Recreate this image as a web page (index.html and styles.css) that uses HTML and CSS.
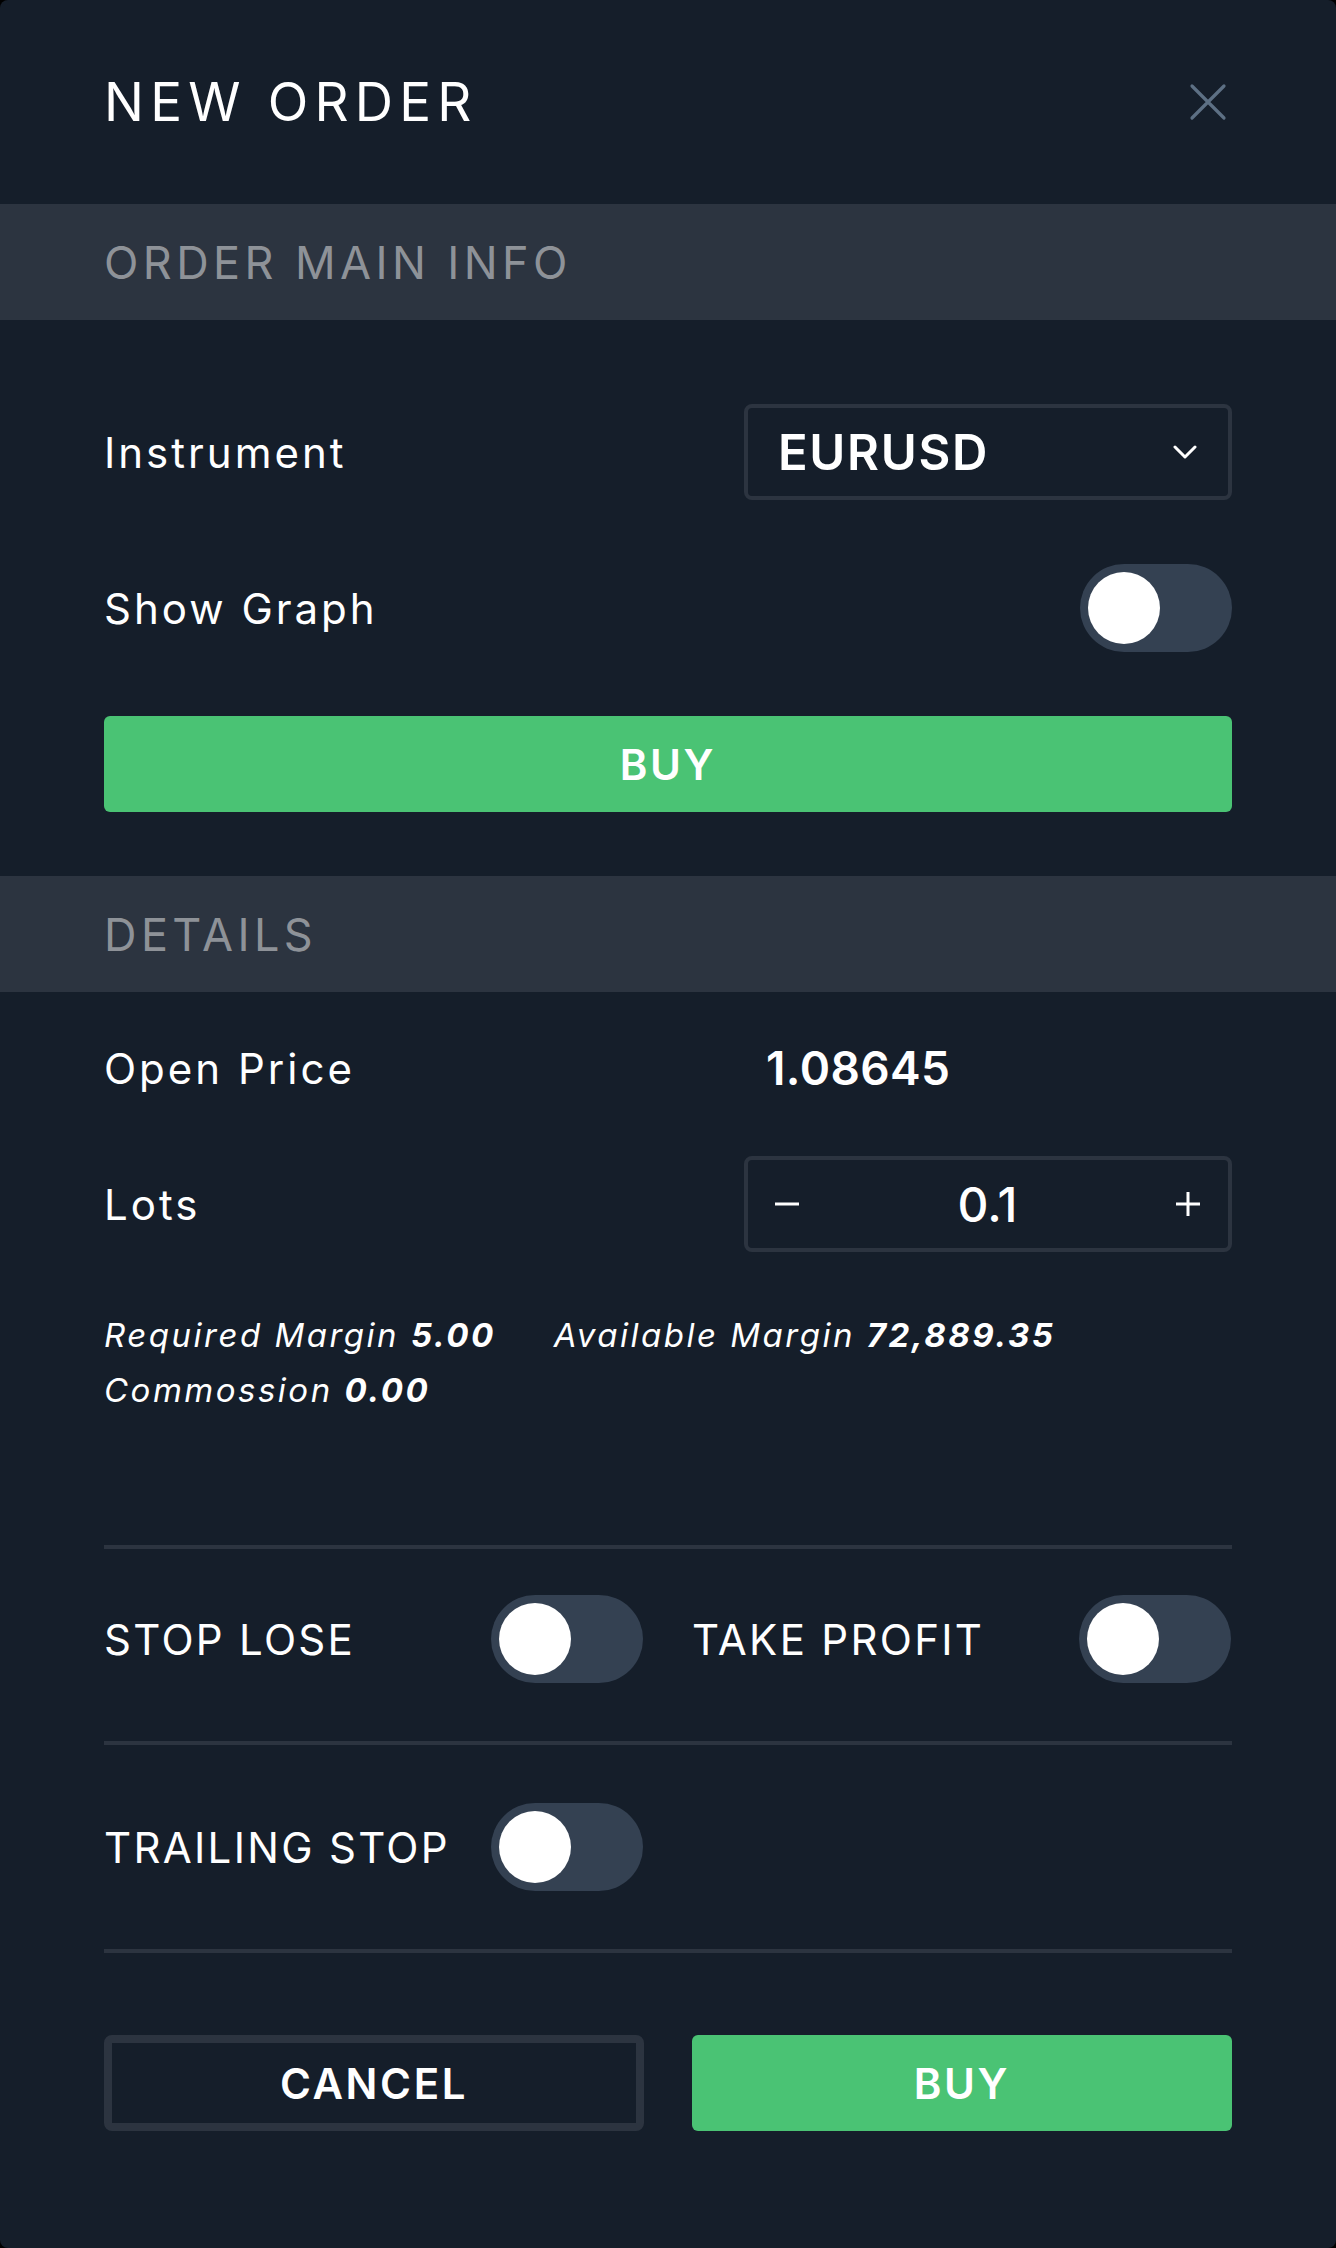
FILE: index.html
```html
<!DOCTYPE html>
<html lang="en">
<head>
<meta charset="utf-8">
<title>New Order</title>
<link rel="stylesheet" href="styles.css">
</head>
<body>
<div class="modal">
  <header class="modal-header">
    <h1 class="title">NEW ORDER</h1>
    <button class="close" aria-label="Close">
      <svg width="48" height="48" viewBox="0 0 48 48"><path d="M8 8 L40 40 M40 8 L8 40" stroke="#5d7084" stroke-width="3.2" stroke-linecap="round" fill="none"/></svg>
    </button>
  </header>

  <div class="band">ORDER MAIN INFO</div>

  <section class="main-info">
    <div class="row">
      <span class="label">Instrument</span>
      <div class="select">
        <span class="select-value">EURUSD</span>
        <svg class="chevron" width="24" height="16" viewBox="0 0 24 16"><path d="M2 3 L12 13 L22 3" stroke="#ffffff" stroke-width="3" stroke-linecap="round" stroke-linejoin="round" fill="none"/></svg>
      </div>
    </div>
    <div class="row row-switch">
      <span class="label">Show Graph</span>
      <span class="toggle"><span class="knob"></span></span>
    </div>
    <button class="btn btn-buy btn-full">BUY</button>
  </section>

  <div class="band">DETAILS</div>

  <section class="details">
    <div class="row">
      <span class="label">Open Price</span>
      <span class="price">1.08645</span>
    </div>
    <div class="row">
      <span class="label">Lots</span>
      <div class="stepper">
        <svg class="step-icon" width="26" height="26" viewBox="0 0 26 26"><path d="M1 13 H25" stroke="#ffffff" stroke-width="3" fill="none"/></svg>
        <span class="step-value">0.1</span>
        <svg class="step-icon" width="26" height="26" viewBox="0 0 26 26"><path d="M1 13 H25 M13 1 V25" stroke="#ffffff" stroke-width="3" fill="none"/></svg>
      </div>
    </div>
    <div class="margins">
      <div class="margin-line">
        <span class="m-item">Required Margin <b>5.00</b></span>
        <span class="m-item">Available Margin <b>72,889.35</b></span>
      </div>
      <div class="margin-line">
        <span class="m-item">Commossion <b>0.00</b></span>
      </div>
    </div>
  </section>

  <div class="divider"></div>

  <div class="switch-grid">
    <div class="switch-cell">
      <span class="caps-label">STOP LOSE</span>
      <span class="toggle"><span class="knob"></span></span>
    </div>
    <div class="switch-cell">
      <span class="caps-label">TAKE PROFIT</span>
      <span class="toggle"><span class="knob"></span></span>
    </div>
  </div>

  <div class="divider"></div>

  <div class="switch-grid">
    <div class="switch-cell">
      <span class="caps-label">TRAILING STOP</span>
      <span class="toggle"><span class="knob"></span></span>
    </div>
  </div>

  <div class="divider"></div>

  <div class="actions">
    <button class="btn btn-cancel">CANCEL</button>
    <button class="btn btn-buy">BUY</button>
  </div>
</div>
</body>
</html>
```

FILE: styles.css
```css
* { box-sizing: border-box; }

html, body {
  margin: 0;
  padding: 0;
  background: #000000;
}

body {
  font-family: "Inter", "Open Sans", sans-serif;
  color: #ffffff;
}

.modal {
  width: 1336px;
  height: 2248px;
  background: #151e2a;
  border-radius: 8px;
  overflow: hidden;
}

.modal-header {
  height: 204px;
  padding: 0 104px;
  display: flex;
  align-items: center;
  justify-content: space-between;
}

.title {
  margin: 0;
  font-size: 53px;
  font-weight: 400;
  letter-spacing: 6.2px;
  line-height: 1;
}

.close {
  width: 48px;
  height: 48px;
  padding: 0;
  border: 0;
  background: transparent;
  display: flex;
}

.band {
  height: 116px;
  background: #2c3440;
  padding-left: 104px;
  display: flex;
  align-items: center;
  font-size: 45px;
  font-weight: 400;
  letter-spacing: 4.4px;
  color: #8e9298;
}

.main-info {
  padding: 84px 104px 64px;
  display: flex;
  flex-direction: column;
  gap: 64px;
}

.row {
  display: grid;
  grid-template-columns: 640px 1fr;
  align-items: center;
  height: 96px;
}

.row-switch {
  height: 88px;
  display: flex;
  justify-content: space-between;
}

.label {
  font-size: 42px;
  font-weight: 400;
  letter-spacing: 3px;
}

.select {
  height: 96px;
  border: 4px solid #2c3440;
  border-radius: 8px;
  display: flex;
  align-items: center;
  justify-content: space-between;
  padding: 0 31px 0 30px;
}

.select-value {
  font-size: 49px;
  font-weight: 600;
  letter-spacing: 1.7px;
}

.chevron { display: block; }

.toggle {
  width: 152px;
  height: 88px;
  border-radius: 44px;
  background: #344152;
  padding: 8px;
  display: flex;
}

.knob {
  width: 72px;
  height: 72px;
  border-radius: 50%;
  background: #ffffff;
}

.btn {
  height: 96px;
  border-radius: 6px;
  border: 0;
  font-family: inherit;
  font-size: 42px;
  font-weight: 600;
  color: #ffffff;
  letter-spacing: 2.6px;
  cursor: pointer;
}

.btn-buy { background: #4ac374; }

.btn-full { width: 100%; }

.details {
  padding: 28px 104px 0;
  display: flex;
  flex-direction: column;
  gap: 40px;
}

.price {
  font-size: 46px;
  font-weight: 600;
  padding-left: 22px;
  letter-spacing: 0.4px;
}

.stepper {
  height: 96px;
  border: 4px solid #2c3440;
  border-radius: 8px;
  display: flex;
  align-items: center;
  justify-content: space-between;
  padding: 0 27px 0 26px;
}

.step-icon { display: block; }

.step-value {
  font-size: 48px;
  font-weight: 500;
}

.margins {
  margin-top: 16px;
  font-size: 33px;
  font-style: italic;
  font-weight: 400;
  line-height: 55px;
  letter-spacing: 2.5px;
}

.margin-line {
  display: flex;
  gap: 58px;
}

.m-item b { font-weight: 700; }

.divider {
  height: 4px;
  margin: 0 104px;
  background: #2c3440;
}

.details + .divider { margin-top: 127px; }

.switch-grid {
  padding: 46px 104px 58px;
  display: grid;
  grid-template-columns: 540px 540px;
  column-gap: 48px;
}

.switch-grid + .divider + .switch-grid { padding-top: 58px; }

.switch-cell {
  display: flex;
  align-items: center;
  justify-content: space-between;
  height: 88px;
}

.switch-cell .toggle { margin-right: 1px; }

.caps-label {
  font-size: 42px;
  font-weight: 400;
  letter-spacing: 2.3px;
}

.actions {
  padding: 82px 104px 0;
  display: grid;
  grid-template-columns: 540px 540px;
  column-gap: 48px;
}

.btn-cancel {
  background: transparent;
  border: 8px solid #2c3440;
  border-radius: 8px;
}
```
